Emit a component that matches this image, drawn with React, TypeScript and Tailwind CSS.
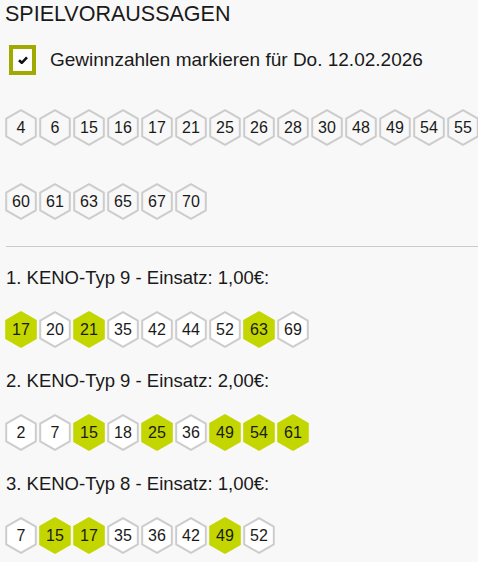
import React from 'react';

type Pick = { label: string; numbers: number[] };

const predictions: number[] = [4, 6, 15, 16, 17, 21, 25, 26, 28, 30, 48, 49, 54, 55, 60, 61, 63, 65, 67, 70];
const winning = new Set([15, 17, 21, 25, 49, 54, 61, 63]);

const picks: Pick[] = [
  { label: '1. KENO-Typ 9 - Einsatz: 1,00€:', numbers: [17, 20, 21, 35, 42, 44, 52, 63, 69] },
  { label: '2. KENO-Typ 9 - Einsatz: 2,00€:', numbers: [2, 7, 15, 18, 25, 36, 49, 54, 61] },
  { label: '3. KENO-Typ 8 - Einsatz: 1,00€:', numbers: [7, 15, 17, 35, 36, 42, 49, 52] },
];

const Hex: React.FC<{ n: number; hit?: boolean; plain?: boolean }> = ({ n, hit, plain }) => (
  <div className="relative w-[32px] h-[37px] flex-shrink-0">
    <svg width="32" height="37" viewBox="0 0 32 37" className="absolute inset-0">
      <polygon
        points="16,1.2 30.8,9.6 30.8,27.4 16,35.8 1.2,27.4 1.2,9.6"
        fill={hit ? '#c3d600' : plain ? '#f8f8f8' : '#ffffff'}
        stroke={hit ? '#c3d600' : '#cccccc'}
        strokeWidth="2"
        strokeLinejoin="round"
      />
    </svg>
    <span className="relative flex h-full items-center justify-center text-[16px] text-[#1a1a1a]">{n}</span>
  </div>
);

export default function App() {
  const rows = [predictions.slice(0, 14), predictions.slice(14)];

  return (
    <div
      className="min-h-[562px] w-[478px] overflow-hidden bg-[#f8f8f8] text-[#1a1a1a]"
      style={{ fontFamily: '"Liberation Sans", Arial, sans-serif' }}
    >
      {/* Header */}
      <h1 className="pl-[5px] text-[21.5px] leading-[28px]">SPIELVORAUSSAGEN</h1>

      <div className="mt-[17px] flex h-[30px] items-center pl-[9px]">
        <div className="flex h-[30px] w-[27px] items-center justify-center border-[4px] border-[#a0aa00] bg-white">
          <svg width="10" height="8" viewBox="0 0 10 8">
            <path d="M1 4.2 L3.8 6.8 L9 1.4" fill="none" stroke="#111" strokeWidth="2.6" />
          </svg>
        </div>
        <span className="ml-[14px] text-[19px]">Gewinnzahlen markieren für Do. 12.02.2026</span>
      </div>

      {/* Predictions */}
      <div className="mt-[34px] flex flex-col gap-[37px] pl-[5px]">
        {rows.map((row, i) => (
          <div key={i} className="flex gap-[2px]">
            {row.map((n) => (
              <Hex key={n} n={n} plain />
            ))}
          </div>
        ))}
      </div>

      <div className="ml-[6px] mt-[26px] h-px bg-[#cccccc]" />

      {/* Tips */}
      <div className="mt-[18px] flex flex-col gap-[20px]">
        {picks.map((p) => (
          <div key={p.label} className="flex flex-col gap-[20px]">
            <p className="pl-[6px] text-[18.5px] leading-[26px]">{p.label}</p>
            <div className="flex gap-[2px] pl-[5px]">
              {p.numbers.map((n) => (
                <Hex key={n} n={n} hit={winning.has(n)} />
              ))}
            </div>
          </div>
        ))}
      </div>
    </div>
  );
}
